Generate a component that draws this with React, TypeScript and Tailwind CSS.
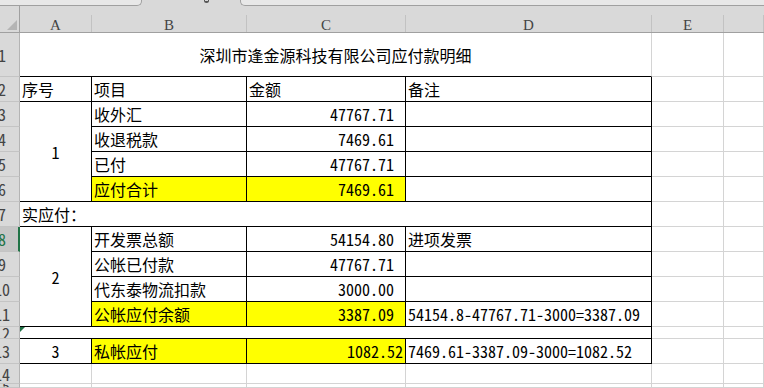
import React from 'react';

type CellProps = {
  children?: React.ReactNode;
  className?: string;
};

// table cell with black borders
function T({ children, className = '' }: CellProps) {
  return (
    <div className={`relative flex items-center overflow-hidden whitespace-nowrap border-r border-b border-black ${className}`}>
      {children}
    </div>
  );
}

// plain cell with light grid lines
function G({ className = '' }: CellProps) {
  return <div className={`border-r border-b border-[#d4d4d4] ${className}`} />;
}

function RowHead({ n, active = false, className = '' }: { n: number; active?: boolean; className?: string }) {
  return (
    <div
      className={`flex items-center overflow-hidden border-b border-[#c4c4c4] ${
        active ? 'bg-[#c6c6c6] border-r-2 border-r-[#217346] text-[#217346]' : 'bg-[#d9d9d9] border-r border-r-[#b4b4b4] text-[#444]'
      } ${className}`}
    >
      <div className="w-[38px] -ml-[17px] shrink-0 text-center">{n}</div>
    </div>
  );
}

function ColHead({ label }: { label: string }) {
  return (
    <div className="flex bg-[#d9d9d9] border-b border-[#a0a0a0]">
      <div className="flex-1 pt-[12px] text-center font-['Liberation_Serif',serif] text-[15px] leading-none text-[#444]">
        {label}
      </div>
      <div className="w-px h-[17px] self-end bg-[#c2c2c2]" />
    </div>
  );
}

const num = 'justify-end pr-[11px]';
const yellow = 'bg-[#ffff00]';

export default function App() {
  return (
    <div className="w-[764px] h-[388px] overflow-hidden bg-white text-black font-['Noto_Sans_CJK_SC','Liberation_Sans',sans-serif] [font-feature-settings:'hwid'] text-[16px] leading-[16px]">
      {/* tab strip */}
      <div className="flex h-[6px] bg-[#d9d9d9]">
        <div className="w-[142px] bg-[#e8e8e8] border-b border-r border-[#a0a0a0] rounded-br-[5px]" />
        <div className="w-[98px] flex justify-center">
          <div className="ml-[30px] w-[5px] h-[3px] border-b-2 border-x border-[#555] rounded-b-full" />
        </div>
        <div className="flex-1 bg-[#e8e8e8] border-b border-l border-[#a0a0a0] rounded-bl-[5px]" />
      </div>

      <div className="grid h-[382px] grid-cols-[20px_72px_155px_159px_246px_72px_1fr] grid-rows-[27px_44px_repeat(10,25px)_12px_25px_20px_1fr]">
        {/* column headers */}
        <div className="flex items-end justify-end bg-[#d9d9d9] border-b border-r border-[#a0a0a0] pr-[2px] pb-[2px]">
          <svg width="10" height="10" viewBox="0 0 10 10">
            <polygon points="10,0 10,10 0,10" fill="#b4b4b4" />
          </svg>
        </div>
        <ColHead label="A" />
        <ColHead label="B" />
        <ColHead label="C" />
        <ColHead label="D" />
        <ColHead label="E" />
        <ColHead label="" />

        {/* row 1 */}
        <RowHead n={1} />
        <div className="col-span-4 flex items-center justify-center border-b border-black border-r border-r-[#d4d4d4]">
          深圳市逢金源科技有限公司应付款明细
        </div>
        <G />
        <G />

        {/* row 2 */}
        <RowHead n={2} />
        <T className="pl-[2px]">序号</T>
        <T className="pl-[2px]">项目</T>
        <T className="pl-[2px]">金额</T>
        <T className="pl-[2px]">备注</T>
        <G />
        <G />

        {/* rows 3-6 */}
        <RowHead n={3} />
        <T className="row-span-4 justify-center">1</T>
        <T className="pl-[2px]">收外汇</T>
        <T className={num}>47767.71</T>
        <T />
        <G />
        <G />

        <RowHead n={4} />
        <T className="pl-[2px]">收退税款</T>
        <T className={num}>7469.61</T>
        <T />
        <G />
        <G />

        <RowHead n={5} />
        <T className="pl-[2px]">已付</T>
        <T className={num}>47767.71</T>
        <T />
        <G />
        <G />

        <RowHead n={6} />
        <T className={`pl-[2px] ${yellow}`}>应付合计</T>
        <T className={`${num} ${yellow}`}>7469.61</T>
        <T />
        <G />
        <G />

        {/* row 7 */}
        <RowHead n={7} />
        <T className="col-span-4 pl-[2px]">实应付：</T>
        <G />
        <G />

        {/* rows 8-11 */}
        <RowHead n={8} active />
        <T className="row-span-4 justify-center">2</T>
        <T className="pl-[2px]">开发票总额</T>
        <T className={num}>54154.80</T>
        <T className="pl-[2px]">进项发票</T>
        <G />
        <G />

        <RowHead n={9} />
        <T className="pl-[2px]">公帐已付款</T>
        <T className={num}>47767.71</T>
        <T />
        <G />
        <G />

        <RowHead n={10} />
        <T className="pl-[2px]">代东泰物流扣款</T>
        <T className={num}>3000.00</T>
        <T />
        <G />
        <G />

        <RowHead n={11} />
        <T className={`pl-[2px] ${yellow}`}>公帐应付余额</T>
        <T className={`${num} ${yellow}`}>3387.09</T>
        <T className="pl-[2px]">54154.8-47767.71-3000=3387.09</T>
        <G />
        <G />

        {/* row 12 */}
        <RowHead n={12} />
        <T className="col-span-4">
          <svg className="absolute left-0 top-0" width="5" height="5" viewBox="0 0 5 5">
            <polygon points="0,0 5,0 0,5" fill="#1e7145" />
          </svg>
        </T>
        <G />
        <G />

        {/* row 13 */}
        <RowHead n={13} />
        <T className="justify-center">3</T>
        <T className={`pl-[2px] ${yellow}`}>私帐应付</T>
        <T className={`justify-end pr-[2px] ${yellow}`}>1082.52</T>
        <T className="pl-[2px]">7469.61-3387.09-3000=1082.52</T>
        <G />
        <G />

        {/* rows 14-15 */}
        <RowHead n={14} />
        <G />
        <G />
        <G />
        <G />
        <G />
        <G />

        <RowHead n={15} />
        <G />
        <G />
        <G />
        <G />
        <G />
        <G />
      </div>
    </div>
  );
}
